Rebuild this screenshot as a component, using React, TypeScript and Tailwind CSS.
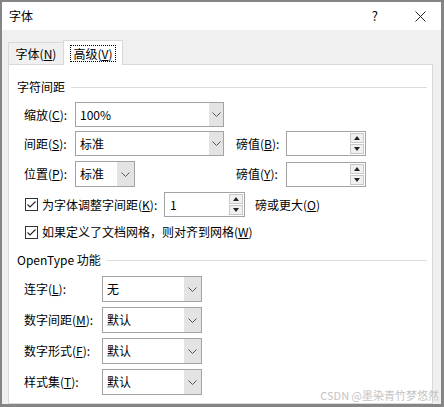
import type { ReactNode } from 'react'

const font = { fontFamily: '"Noto Sans CJK SC", "Microsoft YaHei", sans-serif' }

function Chevron() {
  return (
    <svg width="9" height="5" viewBox="0 0 9 5" fill="none">
      <path d="M0.5 0.5 L4.5 4.5 L8.5 0.5" stroke="#555" strokeWidth="1" />
    </svg>
  )
}

function Select({ value, width, btn = 'w-[14px]', h = 'h-[25px]' }: { value: string; width: string; btn?: string; h?: string }) {
  return (
    <div className={`flex border border-[#a2a2a2] bg-white ${h} ${width}`}>
      <div className="flex-1 flex items-center pl-[4px] text-[12px] text-black">{value}</div>
      <div className={`flex items-center justify-center bg-[#e3e3e3] ${btn}`}>
        <Chevron />
      </div>
    </div>
  )
}

function Spin({ value = '', width }: { value?: string; width: string }) {
  return (
    <div className={`flex h-[25px] border border-[#a2a2a2] bg-white ${width}`}>
      <div className="flex-1 flex items-center pl-[5px] text-[12px] text-black">{value}</div>
      <div className="w-[16px] flex flex-col gap-[1px] p-[1px]">
        <div className="flex-1 flex items-center justify-center bg-[#f0f0f0] border border-[#c8c8c8]">
          <svg width="6" height="4" viewBox="0 0 6 4"><path d="M3 0 L6 4 L0 4 Z" fill="#222" /></svg>
        </div>
        <div className="flex-1 flex items-center justify-center bg-[#f0f0f0] border border-[#c8c8c8]">
          <svg width="6" height="4" viewBox="0 0 6 4"><path d="M0 0 L6 0 L3 4 Z" fill="#222" /></svg>
        </div>
      </div>
    </div>
  )
}

function Check() {
  return (
    <svg width="13" height="13" viewBox="0 0 13 13" className="shrink-0">
      <rect x="0.5" y="0.5" width="12" height="12" fill="white" stroke="#333" />
      <path d="M2.5 6.5 L5 9 L10.5 3.5" stroke="#222" strokeWidth="1.1" fill="none" />
    </svg>
  )
}

function Label({ children, w }: { children: ReactNode; w: string }) {
  return <div className={`text-[12px] text-black ${w}`}>{children}</div>
}

function Section({ title, cls }: { title: string; cls: string }) {
  return (
    <div className={`flex items-center gap-[6px] ${cls}`}>
      <span className="text-[12px] text-black whitespace-nowrap">{title}</span>
      <div className="flex-1 h-px bg-[#dcdcdc] mr-[5px]" />
    </div>
  )
}

export default function App() {
  return (
    <div
      className="w-[444px] h-[407px] flex flex-col border-l-2 border-t-2 border-r-[3px] border-b-[3px] border-[#858585] overflow-hidden relative"
      style={font}
    >
      {/* Title bar */}
      <div className="h-[28px] bg-white flex items-center pl-[7px] shrink-0">
        <span className="text-[12px] text-black">字体</span>
        <span className="ml-auto mr-[37px] text-[13px] text-black">?</span>
        <svg width="11" height="11" viewBox="0 0 11 11" className="mr-[15px]">
          <path d="M0.5 0.5 L10.5 10.5 M10.5 0.5 L0.5 10.5" stroke="#222" strokeWidth="1" />
        </svg>
      </div>

      {/* Body */}
      <div className="flex-1 bg-[#f0f0f0] pl-[6px] pr-[8px] pt-[10px] flex flex-col">
        {/* Tabs */}
        <div className="flex items-end h-[24px] relative z-10">
          <div className="h-[22px] w-[55px] border-t border-l border-[#d9d9d9] bg-[#f0f0f0] flex items-center justify-center text-[12px] text-black">
            字体(<u>N</u>)
          </div>
          <div className="h-[25px] w-[60px] -mb-px border-t border-l border-r border-[#d9d9d9] bg-white flex items-center justify-center">
            <span className="text-[12px] text-black outline-1 outline-dotted outline-black px-[2px] leading-[15px]">
              高级(<u>V</u>)
            </span>
          </div>
        </div>

        {/* Panel */}
        <div className="flex-1 border border-[#d9d9d9] bg-white pl-[8px] pt-[13px]">
          <Section title="字符间距" cls="h-[18px]" />

          <div className="flex items-center mt-[6px] pl-[7px]">
            <Label w="w-[51px]">缩放(<u>C</u>):</Label>
            <Select value="100%" width="w-[149px]" />
          </div>

          <div className="flex items-center mt-[4px] pl-[7px]">
            <Label w="w-[51px]">间距(<u>S</u>):</Label>
            <Select value="标准" width="w-[149px]" />
            <Label w="w-[50px] ml-[12px]">磅值(<u>B</u>):</Label>
            <Spin width="w-[80px]" />
          </div>

          <div className="flex items-center mt-[5px] pl-[7px]">
            <Label w="w-[51px]">位置(<u>P</u>):</Label>
            <Select value="标准" width="w-[60px]" btn="w-[17px]" h="h-[26px]" />
            <Label w="w-[50px] ml-[101px]">磅值(<u>Y</u>):</Label>
            <Spin width="w-[80px]" />
          </div>

          <div className="flex items-center mt-[5px] pl-[8px]">
            <Check />
            <span className="ml-[4px] w-[122px] text-[12px] text-black">
              为字体调整字间距(<u>K</u>):
            </span>
            <Spin value="1" width="w-[81px]" />
            <span className="ml-[10px] text-[12px] text-black">
              磅或更大(<u>O</u>)
            </span>
          </div>

          <div className="flex items-center mt-[5px] pl-[8px] h-[20px]">
            <Check />
            <span className="ml-[4px] text-[12px] text-black">
              如果定义了文档网格，则对齐到网格(<u>W</u>)
            </span>
          </div>

          <Section title="OpenType 功能" cls="h-[18px] mt-[9px]" />

          <div className="flex flex-col gap-[5px] mt-[7px] pl-[7px]">
            {[
              ['连字(', 'L', '):', '无'],
              ['数字间距(', 'M', '):', '默认'],
              ['数字形式(', 'F', '):', '默认'],
              ['样式集(', 'T', '):', '默认'],
            ].map(([a, k, b, v]) => (
              <div key={k} className="flex items-center">
                <Label w="w-[78px]">
                  {a}
                  <u>{k}</u>
                  {b}
                </Label>
                <Select value={v} width="w-[100px]" btn="w-[17px]" h="h-[26px]" />
              </div>
            ))}
          </div>
        </div>
      </div>

      <div className="absolute right-[2px] bottom-[2px] text-[11px] text-[#c4c4c4] leading-[14px]">
        CSDN @墨染青竹梦悠然
      </div>
    </div>
  )
}
